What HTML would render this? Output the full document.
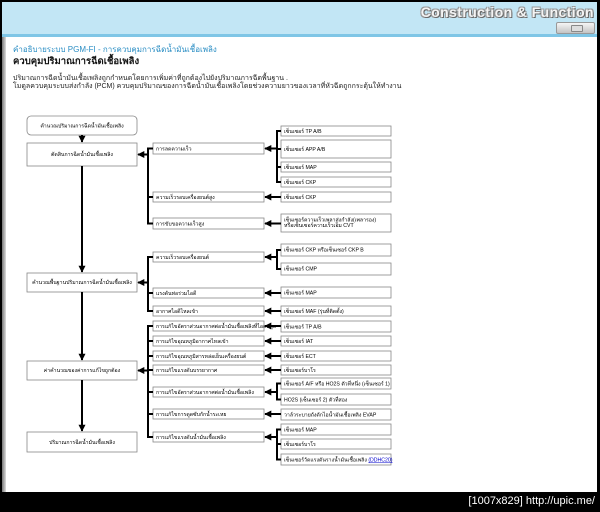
<!DOCTYPE html>
<html><head><meta charset="utf-8">
<style>
html,body{margin:0;padding:0}
body{width:600px;height:512px;background:#000;position:relative;overflow:hidden;font-family:"Liberation Sans","Noto Sans CJK SC",sans-serif}
#page{position:absolute;left:2px;top:2px;width:595px;height:490px;background:#fff}
#hdr{position:absolute;left:0;top:0;width:595px;height:32px;background:#c2e6f5;border-bottom:3px solid #7fc6e6}
#ttl{position:absolute;right:3px;top:2px;font-size:14px;font-weight:bold;color:#f4f4f4;text-shadow:1px 1px 0 #666,-1px -1px 0 #999,1px -1px 0 #999,-1px 1px 0 #999;letter-spacing:0.4px}
#btn{position:absolute;right:2px;top:20px;width:37px;height:10px;background:linear-gradient(#f6f6f6,#c4c4c4);border:1px solid #999;border-radius:2px}
#btn i{position:absolute;left:14px;top:2px;width:10px;height:5px;border:1px solid #888;border-radius:1px;background:#ddd}
#lbar{position:absolute;left:0;top:35px;width:4px;height:455px;background:linear-gradient(90deg,#777,#ddd)}
.t1{position:absolute;left:11px;top:41px;font-size:8px;color:#2b8ec4}
.t2{position:absolute;left:11px;top:52px;font-size:9.5px;font-weight:bold;color:#111}
.p{position:absolute;left:11px;font-size:7px;color:#222;white-space:nowrap}
#foot{position:absolute;right:5px;top:495px;color:#fff;font-size:11px;font-family:"Liberation Sans",sans-serif}
svg{position:absolute;left:0;top:0}
svg text{font-family:"Liberation Sans","Noto Sans CJK SC",sans-serif;font-size:5.2px;fill:#000}
</style></head><body>
<div id="page">
<div id="hdr"><div id="ttl">Construction &amp; Function</div><div id="btn"><i></i></div></div>
<div id="lbar"></div>
<div class="t1">คำอธิบายระบบ PGM-FI - การควบคุมการฉีดน้ำมันเชื้อเพลิง</div>
<div class="t2">ควบคุมปริมาณการฉีดเชื้อเพลิง</div>
<div class="p" style="top:71px">ปริมาณการฉีดน้ำมันเชื้อเพลิงถูกกำหนดโดยการเพิ่มค่าที่ถูกต้องไปยังปริมาณการฉีดพื้นฐาน .</div>
<div class="p" style="top:79px">โมดูลควบคุมระบบส่งกำลัง (PCM) ควบคุมปริมาณของการฉีดน้ำมันเชื้อเพลิงโดยช่วงความยาวของเวลาที่หัวฉีดถูกกระตุ้นให้ทำงาน</div>
</div>
<div id="foot">[1007x829] http://upic.me/</div>
<svg width="600" height="512" viewBox="0 0 600 512">
<defs><marker id="a" viewBox="0 0 10 10" refX="9" refY="5" markerWidth="3.5" markerHeight="3.5" orient="auto"><path d="M0,0L10,5L0,10z" fill="#000"/></marker></defs>
<g fill="#fff" stroke="#888" stroke-width="0.8">
<rect x="27" y="116" width="110" height="19" rx="4"/>
<rect x="27" y="143" width="110" height="23"/>
<rect x="27" y="273" width="110" height="19"/>
<rect x="27" y="361" width="110" height="19"/>
<rect x="27" y="432" width="110" height="20"/>
<rect x="153" y="143" width="111" height="11"/><rect x="153" y="192" width="111" height="10"/><rect x="153" y="218" width="111" height="11"/>
<rect x="153" y="252" width="111" height="10"/><rect x="153" y="288" width="111" height="10"/><rect x="153" y="306" width="111" height="10"/>
<rect x="153" y="321" width="111" height="10"/><rect x="153" y="336" width="111" height="10"/><rect x="153" y="351" width="111" height="10"/><rect x="153" y="365" width="111" height="10"/>
<rect x="153" y="387" width="111" height="10"/><rect x="153" y="409" width="111" height="10"/><rect x="153" y="432" width="111" height="10"/>
<rect x="281" y="126" width="110" height="10"/><rect x="281" y="140" width="110" height="18"/><rect x="281" y="162" width="110" height="10"/><rect x="281" y="177" width="110" height="10"/>
<rect x="281" y="192" width="110" height="10"/><rect x="281" y="214" width="110" height="18"/>
<rect x="281" y="244" width="110" height="12"/><rect x="281" y="263" width="110" height="12"/><rect x="281" y="287" width="110" height="11"/><rect x="281" y="306" width="110" height="10"/>
<rect x="281" y="321" width="110" height="11"/><rect x="281" y="336" width="110" height="10"/><rect x="281" y="351" width="110" height="10"/><rect x="281" y="365" width="110" height="10"/>
<rect x="281" y="378" width="110" height="11"/><rect x="281" y="394" width="110" height="11"/><rect x="281" y="409" width="110" height="11"/>
<rect x="281" y="424" width="110" height="11"/><rect x="281" y="439" width="110" height="10"/><rect x="281" y="454" width="110" height="11"/>
</g>
<g stroke="#000" stroke-width="2" fill="none">
<line x1="82" y1="135" x2="82" y2="142" marker-end="url(#a)"/>
<line x1="82" y1="166" x2="82" y2="272" marker-end="url(#a)"/>
<line x1="82" y1="292" x2="82" y2="360" marker-end="url(#a)"/>
<line x1="82" y1="380" x2="82" y2="431" marker-end="url(#a)"/>
<path d="M153,148.5H148V223.5H153M148,197H153"/><line x1="148" y1="154.5" x2="138" y2="154.5" marker-end="url(#a)"/>
<path d="M153,257H148V311H153M148,293H153"/><line x1="148" y1="282.5" x2="138" y2="282.5" marker-end="url(#a)"/>
<path d="M153,326H148V437H153M148,341H153M148,356H153M148,370H153M148,392H153M148,414H153"/><line x1="148" y1="370.5" x2="138" y2="370.5" marker-end="url(#a)"/>
<path d="M281,131H277V182H281M277,149H281M277,167H281"/><line x1="277" y1="148.5" x2="265" y2="148.5" marker-end="url(#a)"/>
<line x1="281" y1="197" x2="265" y2="197" marker-end="url(#a)"/>
<line x1="281" y1="223.5" x2="265" y2="223.5" marker-end="url(#a)"/>
<path d="M281,250H277V269H281"/><line x1="277" y1="257" x2="265" y2="257" marker-end="url(#a)"/>
<line x1="281" y1="293" x2="265" y2="293" marker-end="url(#a)"/>
<line x1="281" y1="311" x2="265" y2="311" marker-end="url(#a)"/>
<line x1="281" y1="326" x2="265" y2="326" marker-end="url(#a)"/>
<line x1="281" y1="341" x2="265" y2="341" marker-end="url(#a)"/>
<line x1="281" y1="356" x2="265" y2="356" marker-end="url(#a)"/>
<line x1="281" y1="370" x2="265" y2="370" marker-end="url(#a)"/>
<path d="M281,383.5H277V399.5H281"/><line x1="277" y1="392" x2="265" y2="392" marker-end="url(#a)"/>
<line x1="281" y1="414" x2="265" y2="414" marker-end="url(#a)"/>
<path d="M281,429.5H277V459.5H281M277,444H281"/><line x1="277" y1="437" x2="265" y2="437" marker-end="url(#a)"/>
</g>
<g text-anchor="middle">
<text x="82" y="127.5">คำนวณปริมาณการฉีดน้ำมันเชื้อเพลิง</text>
<text x="82" y="156">ตัดสินการฉีดน้ำมันเชื้อเพลิง</text>
<text x="82" y="284">คำนวณพื้นฐานปริมาณการฉีดน้ำมันเชื้อเพลิง</text>
<text x="82" y="372">ค่าคำนวณของค่าการแก้ไขถูกต้อง</text>
<text x="82" y="444">ปริมาณการฉีดน้ำมันเชื้อเพลิง</text>
</g>
<g>
<text x="156" y="150.5">การลดความเร็ว</text>
<text x="156" y="199">ความเร็วรอบเครื่องยนต์สูง</text>
<text x="156" y="225.5">การขับขอความเร็วสูง</text>
<text x="156" y="259">ความเร็วรอบเครื่องยนต์</text>
<text x="156" y="295">แรงดันท่อร่วมไอดี</text>
<text x="156" y="313">อากาศไอดีไหลเข้า</text>
<text x="156" y="328">การแก้ไขอัตราส่วนอากาศต่อน้ำมันเชื้อเพลิงที่ไอดหลุด</text>
<text x="156" y="343">การแก้ไขอุณหภูมิอากาศไหลเข้า</text>
<text x="156" y="358">การแก้ไขอุณหภูมิสารหล่อเย็นเครื่องยนต์</text>
<text x="156" y="372">การแก้ไขแรงดันบรรยากาศ</text>
<text x="156" y="394">การแก้ไขอัตราส่วนอากาศต่อน้ำมันเชื้อเพลิง</text>
<text x="156" y="416">การแก้ไขการดูดซับกักน้ำระเหย</text>
<text x="156" y="439">การแก้ไขแรงดันน้ำมันเชื้อเพลิง</text>
<text x="284" y="133">เซ็นเซอร์ TP A/B</text>
<text x="284" y="151">เซ็นเซอร์ APP A/B</text>
<text x="284" y="169">เซ็นเซอร์ MAP</text>
<text x="284" y="184">เซ็นเซอร์ CKP</text>
<text x="284" y="199">เซ็นเซอร์ CKP</text>
<text x="284" y="221.5">เซ็นเซอร์ความเร็วเพลาส่งกำลัง(เพลารอง)</text>
<text x="284" y="227">หรือเซ็นเซอร์ความเร็วเอ็ม CVT</text>
<text x="284" y="251.5">เซ็นเซอร์ CKP หรือเซ็นเซอร์ CKP B</text>
<text x="284" y="270.5">เซ็นเซอร์ CMP</text>
<text x="284" y="294.5">เซ็นเซอร์ MAP</text>
<text x="284" y="313">เซ็นเซอร์ MAF (รุ่นที่ติดตั้ง)</text>
<text x="284" y="328.5">เซ็นเซอร์ TP A/B</text>
<text x="284" y="343">เซ็นเซอร์ IAT</text>
<text x="284" y="358">เซ็นเซอร์ ECT</text>
<text x="284" y="372">เซ็นเซอร์บาโร</text>
<text x="284" y="385.5">เซ็นเซอร์ A/F หรือ HO2S ตัวที่หนึ่ง (เซ็นเซอร์ 1)</text>
<text x="284" y="401.5">HO2S (เซ็นเซอร์ 2) ตัวที่สอง</text>
<text x="284" y="416.5">วาล์วระบายถังดักไอน้ำมันเชื้อเพลิง EVAP</text>
<text x="284" y="431.5">เซ็นเซอร์ MAP</text>
<text x="284" y="446">เซ็นเซอร์บาโร</text>
<text x="284" y="461.5">เซ็นเซอร์วัดแรงดันรางน้ำมันเชื้อเพลิง <tspan fill="#00c" text-decoration="underline">(DDHC20)</tspan></text>
</g>
</svg>
</body></html>
